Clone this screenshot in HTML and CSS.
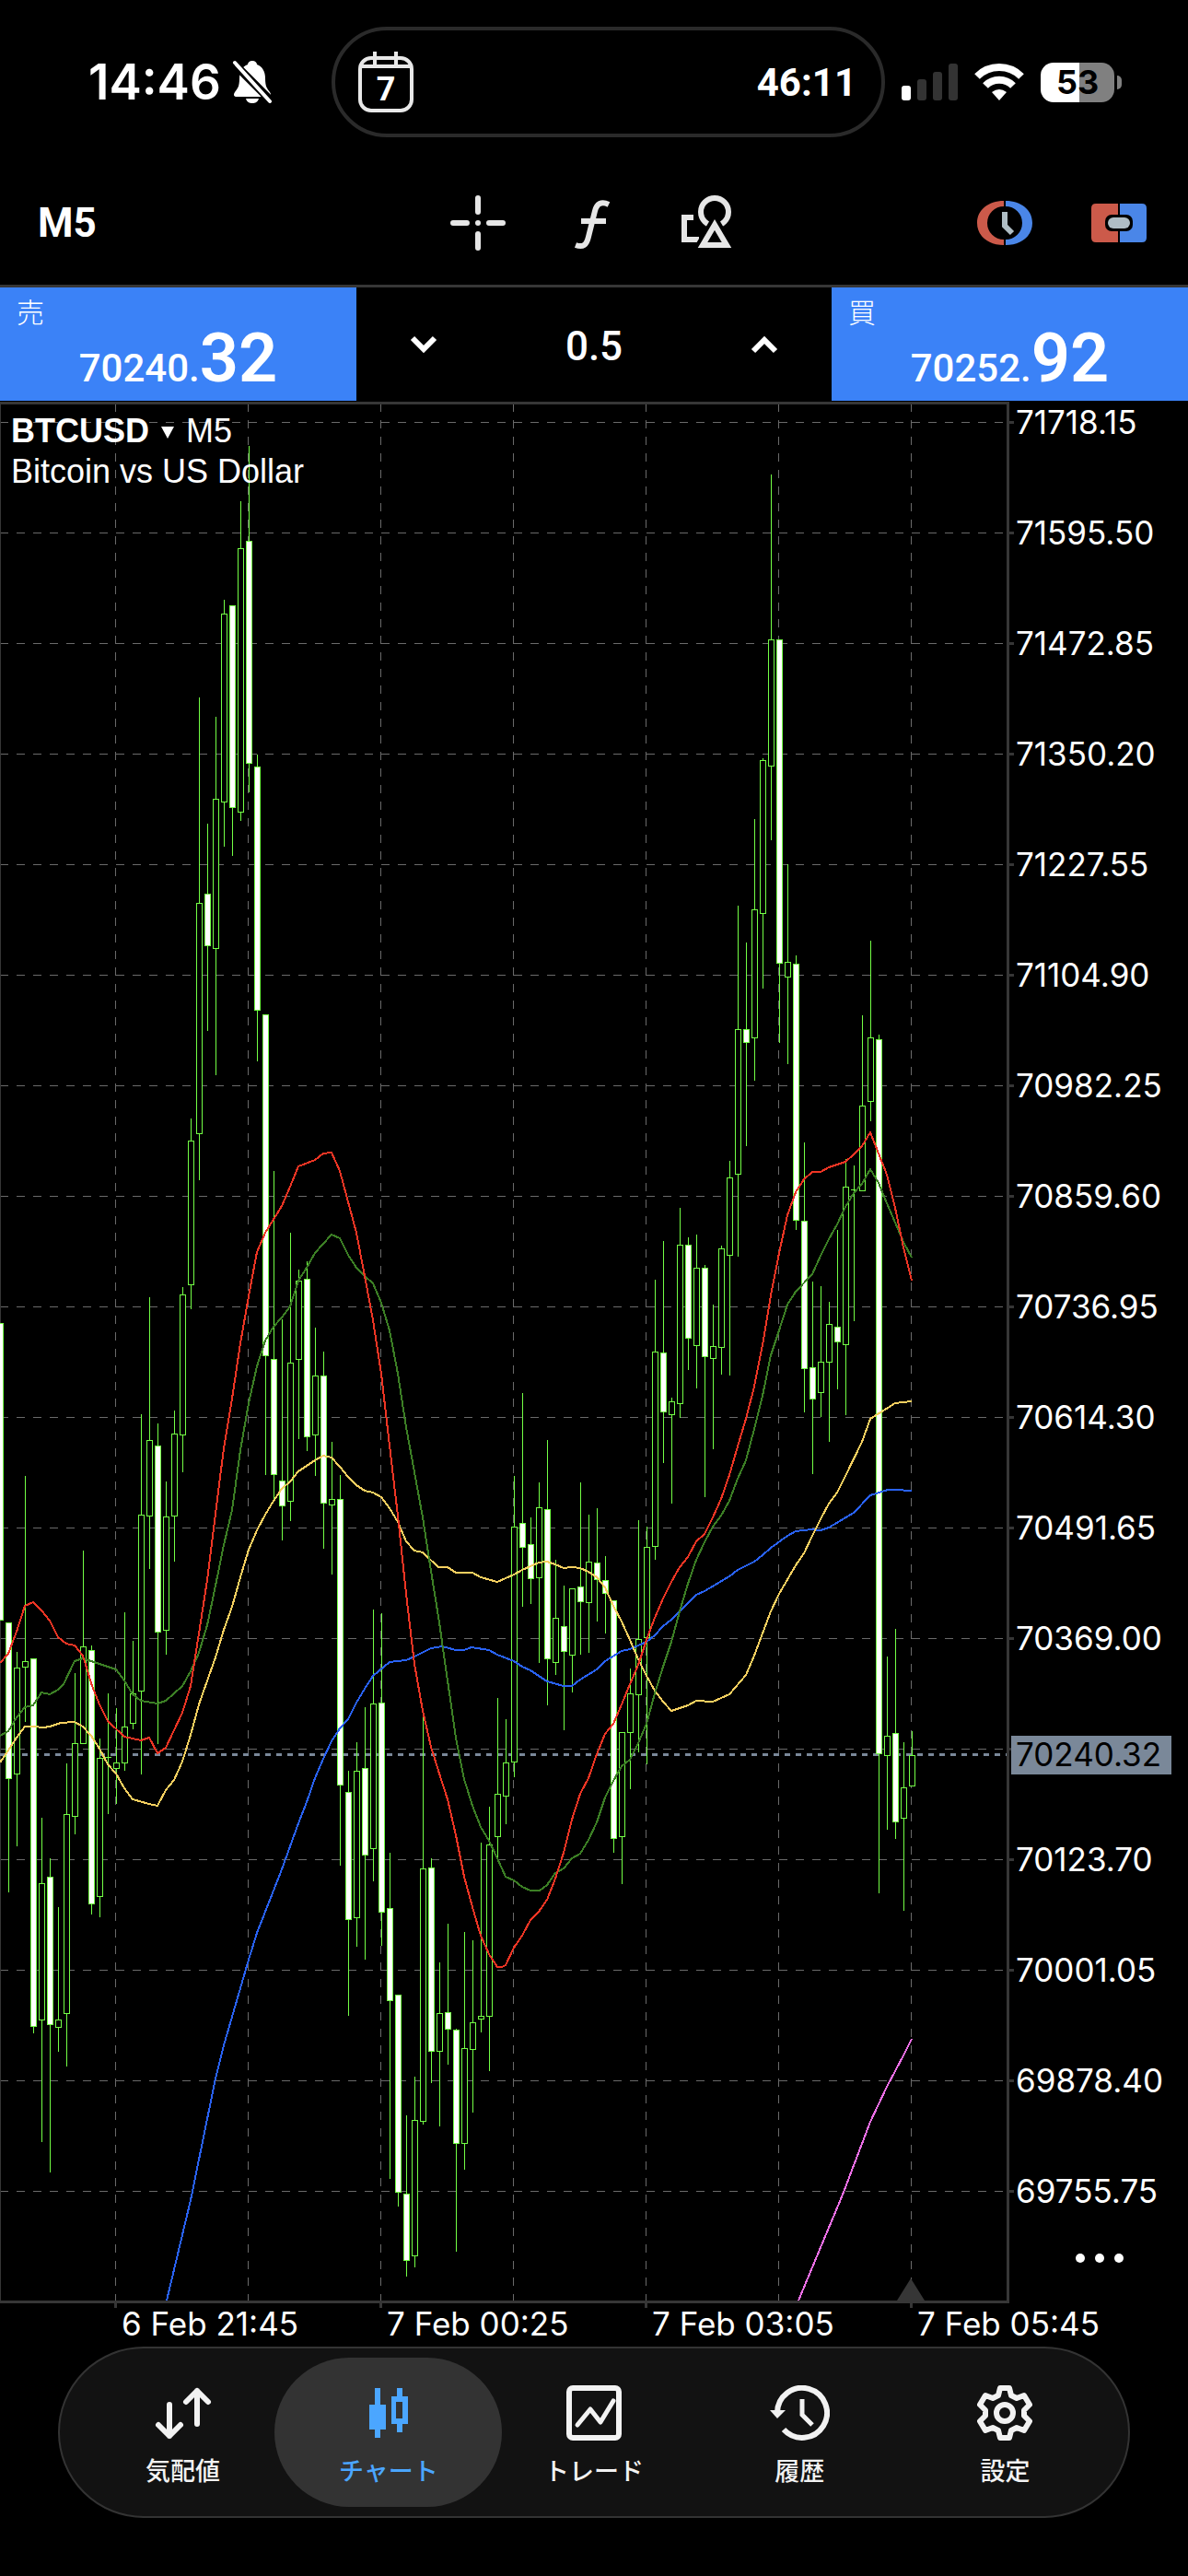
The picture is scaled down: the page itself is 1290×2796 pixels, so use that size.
FILE: index.html
```html
<!DOCTYPE html>
<html lang="ja">
<head>
<meta charset="utf-8">
<meta name="viewport" content="width=device-width, initial-scale=1">
<title>BTCUSD M5</title>
<link rel="stylesheet" href="styles.css">
</head>

<body>
<header class="status">
  <div class="status-left">
    <span class="clock">14:46</span>
    <svg class="bell" width="44" height="48" viewBox="0 0 44 48">
      <path fill="#fff" d="M22 1c3 0 5 2 5 4 6 2 9 8 9 15 0 9 2 11 5 15 2 3 1 5-2 5H5c-3 0-4-2-2-5 3-4 5-6 5-15 0-7 3-13 9-15 0-2 2-4 5-4zM15 42h14c-1 4-4 5-7 5s-6-1-7-5z"/>
      <path stroke="#000" stroke-width="9" d="M1 3l42 42"/>
      <path stroke="#fff" stroke-width="4" stroke-linecap="round" d="M3 3l38 42"/>
    </svg>
  </div>
  <div class="island">
    <div class="calendar">
      <svg width="60" height="68" viewBox="0 0 60 68" fill="none" stroke="#e8e8e8" stroke-width="4">
        <rect x="2" y="8" width="56" height="57" rx="12"/>
        <path d="M2 17h56M18 1v14M41 1v14"/>
      </svg>
      <span class="calendar-day">7</span>
    </div>
    <span class="timer">46:11</span>
  </div>
  <div class="status-right">
    <svg width="61" height="40" viewBox="0 0 61 40">
      <rect x="0" y="24" width="10" height="16" rx="3" fill="#fff"/>
      <rect x="17" y="17" width="10" height="23" rx="3" fill="#333"/>
      <rect x="34" y="9" width="10" height="31" rx="3" fill="#333"/>
      <rect x="51" y="0" width="10" height="40" rx="3" fill="#333"/>
    </svg>
    <svg width="54" height="40" viewBox="0 0 54 40" fill="none" stroke="#fff">
      <path stroke-width="8" d="M3 14a34 34 0 0 1 48 0"/>
      <path stroke-width="8" d="M12 24a21 21 0 0 1 30 0"/>
      <path fill="#fff" stroke="none" d="M27 40l-8-9q8-6 16 0z"/>
    </svg>
    <div class="battery"><span class="battery-level">53</span></div>
  </div>
</header>

<div class="toolbar">
  <button class="timeframe">M5</button>
  <div class="tools">
    <button class="tool" aria-label="十字線">
      <svg width="60" height="60" viewBox="0 0 60 60" stroke="#e6e6e6" stroke-width="6" stroke-linecap="round">
        <path d="M30 3v15M30 42v15M3 30h15M42 30h15M30 30h0"/>
      </svg>
    </button>
    <button class="tool" aria-label="インディケータ">
      <svg width="60" height="60" viewBox="0 0 60 60" fill="none" stroke="#e6e6e6" stroke-width="6">
        <path d="M48 10c-8-4-13-1-15 7l-7 28c-2 9-6 12-14 9"/>
        <path d="M18 28h27"/>
      </svg>
    </button>
    <button class="tool" aria-label="オブジェクト">
      <svg width="60" height="60" viewBox="0 0 60 60" fill="none" stroke="#e6e6e6" stroke-width="6">
        <path d="M16 24H6v24h16"/>
        <circle cx="39" cy="18" r="15"/>
        <path stroke="#000" stroke-width="14" d="M39 32L26 54h26z"/>
        <path d="M39 32L26 54h26z"/>
      </svg>
    </button>
  </div>
  <div class="modes">
    <button class="tool" aria-label="時間">
      <svg width="60" height="60" viewBox="0 0 60 60">
        <path fill="#cc5a4a" d="M29 6v6a18 18 0 0 0 0 36v6C12 54 0 44 0 30S12 6 29 6z"/>
        <path fill="#4a86e8" d="M31 6v6a18 18 0 0 1 0 36v6c17 0 29-10 29-24S48 6 31 6z"/>
        <path fill="none" stroke="#b0bec5" stroke-width="6" d="M30 18v15l8 8"/>
      </svg>
    </button>
    <button class="tool" aria-label="ワンクリック取引">
      <svg width="60" height="60" viewBox="0 0 60 60">
        <path fill="#cc5a4a" d="M29 9H5q-5 0-5 5v32q0 5 5 5h24z"/>
        <path fill="#4a86e8" d="M31 9h24q5 0 5 5v32q0 5-5 5H31z"/>
        <rect x="15" y="21" width="30" height="18" rx="7"/>
        <rect x="18" y="24" width="24" height="12" rx="6" fill="#b0bec5"/>
      </svg>
    </button>
  </div>
</div>

<div class="trade">
  <button class="deal">
    <span class="deal-side">売</span>
    <span class="deal-price">70240.<b>32</b></span>
  </button>
  <div class="volume">
    <button class="step" aria-label="減らす">
      <svg width="30" height="20" viewBox="0 0 30 20" fill="none" stroke="#fff" stroke-width="6"><path d="M3 3l12 12L27 3"/></svg>
    </button>
    <input class="lots" type="text" value="0.5" aria-label="ロット">
    <button class="step" aria-label="増やす">
      <svg width="30" height="20" viewBox="0 0 30 20" fill="none" stroke="#fff" stroke-width="6"><path d="M3 17L15 5l12 12"/></svg>
    </button>
  </div>
  <button class="deal">
    <span class="deal-side">買</span>
    <span class="deal-price">70252.<b>92</b></span>
  </button>
</div>

<main class="chart">
  <svg class="plot" id="plot" viewBox="0 436 1290 2111"></svg>
  <button class="symbol">
    <span><b>BTCUSD</b> <i class="caret"></i> M5</span>
    <span>Bitcoin vs US Dollar</span>
  </button>
  <button class="more" aria-label="メニュー"><i></i><i></i><i></i></button>
</main>

<nav class="tabs">
  <a class="tab" href="#quotes">
    <svg width="66" height="60" viewBox="0 0 66 60" fill="none" stroke="#f2f2f2" stroke-width="6" stroke-linecap="round" stroke-linejoin="round">
      <path d="M18 21v34M6 43l12 12 12-12M48 42V6M36 18L48 6l12 12"/>
    </svg>
    <span>気配値</span>
  </a>
  <a class="tab active" href="#chart">
    <svg width="60" height="60" viewBox="0 0 60 60" fill="#4ba6ff">
      <path d="M15 3h6v18h6v27h-6v9h-6v-9H9V21h6z"/>
      <path fill-rule="evenodd" d="M39 3h6v9h6v30h-6v9h-6v-9h-6V12h6zM38 18v18h7V18z"/>
    </svg>
    <span>チャート</span>
  </a>
  <a class="tab" href="#trade">
    <svg width="60" height="60" viewBox="0 0 60 60" fill="none" stroke="#f2f2f2" stroke-width="6">
      <rect x="3" y="3" width="54" height="54" rx="4"/>
      <path stroke-width="5" stroke-linecap="round" stroke-linejoin="round" d="M12 43l14-17 11 14 14-23"/>
    </svg>
    <span>トレード</span>
  </a>
  <a class="tab" href="#history">
    <svg width="66" height="60" viewBox="0 0 66 60" fill="none" stroke="#f2f2f2" stroke-width="6">
      <path d="M9 30a27 27 0 1 1 7 18"/>
      <path fill="#f2f2f2" stroke="none" d="M1 27h17l-9 9z"/>
      <path stroke-width="5" d="M36 15v17l11 11"/>
    </svg>
    <span>履歴</span>
  </a>
  <a class="tab" href="#settings">
    <svg width="60" height="60" viewBox="0 0 60 60" fill="none" stroke="#f2f2f2" stroke-width="6" stroke-linejoin="round">
      <path d="M25 3h10l2 8 6 3 8-3 6 10-6 6v6l6 6-6 10-8-3-6 3-2 8H25l-2-8-6-3-8 3-6-10 6-6v-6l-6-6 6-10 8 3 6-3z"/>
      <circle cx="30" cy="30" r="9"/>
    </svg>
    <span>設定</span>
  </a>
</nav>

<script src="chart.js"></script>
</body>
</html>
```

FILE: styles.css
```css
* {
  box-sizing: border-box;
}

body {
  margin: 0;
  min-height: 100vh;
  background: #000;
  color: #fff;
  font-family: Inter, "Noto Sans CJK JP", sans-serif;
}

button {
  padding: 0;
  border: 0;
  background: none;
  color: inherit;
  font: inherit;
}

svg {
  display: block;
  flex-shrink: 0;
}

/* status bar */
.status {
  display: grid;
  grid-template-columns: 360fr 601fr 329fr;
  align-items: center;
  padding-top: 29px;
}

.status-left {
  display: flex;
  align-items: center;
  gap: 12px;
  padding-left: 96px;
}

.clock {
  font-size: 53px;
  font-weight: 600;
  line-height: 56px;
}

.island {
  display: flex;
  align-items: center;
  justify-content: space-between;
  height: 120px;
  padding: 0 27px 0 25px;
  border: 4px solid #2a2a2a;
  border-radius: 60px;
}

.calendar {
  display: grid;
  place-items: center;
}

.calendar > * {
  grid-area: 1 / 1;
}

.calendar-day {
  padding-top: 16px;
  font: bold 36px Roboto, sans-serif;
}

.timer {
  font: bold 42px Roboto, sans-serif;
}

.status-right {
  display: flex;
  align-items: center;
  gap: 18px;
  padding-left: 18px;
}

.battery {
  position: relative;
  width: 80px;
  height: 43px;
  border-radius: 14px;
  background: linear-gradient(to right, #fff 53%, #808080 53%);
  color: #000;
  font-size: 36px;
  font-weight: 700;
  line-height: 43px;
  text-align: center;
}

.battery::after {
  content: "";
  position: absolute;
  top: 14px;
  right: -8px;
  width: 5px;
  height: 15px;
  border-radius: 0 5px 5px 0;
  background: #808080;
}

/* toolbar */
.toolbar {
  display: grid;
  grid-template-columns: 1fr auto 1fr;
  align-items: center;
  height: 163px;
  padding: 26px 45px 0 41px;
  border-bottom: 3px solid #363636;
}

.timeframe {
  justify-self: start;
  font: bold 44px Roboto, sans-serif;
}

.tools,
.modes {
  display: flex;
  gap: 64px;
}

.modes {
  justify-self: end;
}

/* one click trading */
.trade {
  display: grid;
  grid-template-columns: 3fr 4fr 3fr;
  height: 124px;
  padding-bottom: 1px;
}

.deal {
  display: flex;
  flex-direction: column;
  justify-content: space-between;
  padding: 8px 18px;
  background: #3b82f7;
}

.deal-side {
  align-self: flex-start;
  font: 300 30px/34px "Noto Sans CJK JP", sans-serif;
}

.deal-price {
  align-self: center;
  font: 500 42px/54px Roboto, sans-serif;
}

.deal-price b {
  font-size: 74px;
  font-weight: 600;
}

.volume {
  display: flex;
  align-items: center;
  justify-content: space-between;
  padding: 0 58px;
}

.lots {
  width: 160px;
  padding: 4px 0 0;
  border: 0;
  background: none;
  color: #fff;
  font: 500 44px/50px Roboto, sans-serif;
  text-align: center;
}

/* chart */
.chart {
  position: relative;
}

.plot {
  width: 100%;
}

.plot text {
  fill: #fff;
  font: 35px Inter, sans-serif;
}

.frame {
  fill: #363636;
}

.grid {
  stroke: #6a6a6a;
  stroke-dasharray: 9 9;
  shape-rendering: crispEdges;
}

.bid {
  stroke: #7a8899;
  stroke-width: 3;
  stroke-dasharray: 6 6;
  shape-rendering: crispEdges;
}

.bid-box {
  fill: #7a8899;
}

.plot .bid-text {
  fill: #000;
}

.candle {
  fill: #000;
  stroke: #73ff45;
  shape-rendering: crispEdges;
}

.candle.down {
  fill: #fff;
}

.wick {
  stroke: #73ff45;
  shape-rendering: crispEdges;
}

.ma {
  fill: none;
  stroke-width: 2;
  shape-rendering: crispEdges;
}

.symbol {
  position: absolute;
  top: 10px;
  left: 12px;
  font: 36px/44px "Liberation Sans", Arial, sans-serif;
  text-align: left;
}

.symbol span {
  display: block;
}

.caret {
  display: inline-block;
  margin: 0 3px 4px;
  border: 7px solid transparent;
  border-top: 13px solid #fff;
  border-bottom: 0;
}

.more {
  position: absolute;
  right: 70px;
  bottom: 91px;
  display: flex;
  gap: 11px;
}

.more i {
  width: 10px;
  height: 10px;
  border-radius: 50%;
  background: #fff;
}

/* bottom tabs */
.tabs {
  display: flex;
  height: 186px;
  margin: 0 63px;
  padding: 10px 22px;
  border: 2px solid #333;
  border-radius: 93px;
  background: #121212;
}

.tab {
  display: flex;
  flex: 1;
  flex-direction: column;
  align-items: center;
  justify-content: center;
  gap: 13px;
  padding-top: 9px;
  border-radius: 81px;
  color: #f2f2f2;
  font: 500 27px/38px "Noto Sans CJK JP", sans-serif;
  text-decoration: none;
}

.tab.active {
  margin: 0 -12px;
  padding: 9px 12px 0;
  background: #333;
  color: #4ba6ff;
}
```

FILE: chart.js
```js
var plot = document.getElementById('plot');

// high, body top, body bottom, low, 1 = bearish; one every 9 units
var candles = [
  [1436,1436,1758,1758,1], [1761,1761,1930,2053,1], [1793,1810,1925,2003,0], [1602,1803,1809,1868,0], [1800,1800,2199,2206,1],
  [1973,2044,2192,2324,0], [2017,2037,2197,2357,1], [2070,2192,2200,2226,0], [1914,1969,2185,2242,0], [1816,1892,1971,1990,0],
  [1683,1787,1892,1892,0], [1786,1791,2066,2077,1], [1887,1908,2058,2080,0], [1838,1907,1907,1968,0], [1854,1913,1919,1957,0],
  [1750,1874,1913,1921,0], [1781,1838,1870,1876,0], [1535,1644,1835,1925,0], [1408,1563,1645,1702,0], [1545,1569,1771,1892,1],
  [1608,1646,1769,1795,0], [1531,1556,1645,1694,0], [1397,1405,1557,1597,0], [1214,1238,1394,1420,0], [757,980,1230,1280,0],
  [894,970,1026,1118,1], [778,867,1029,1166,0], [651,666,870,918,0], [657,657,876,928,1], [544,595,881,890,0],
  [484,587,828,859,1], [819,832,1096,1151,1], [1101,1101,1471,1600,1], [1271,1475,1600,1629,1], [1432,1607,1634,1671,1],
  [1338,1479,1629,1650,0], [1378,1390,1475,1561,0], [1369,1388,1559,1574,1], [1441,1493,1557,1601,0], [1467,1493,1631,1680,1],
  [1565,1627,1633,1708,0], [1601,1627,1937,2024,1], [1922,1945,2083,2187,1], [1891,1922,2081,2112,0], [1853,1919,2013,2126,1],
  [1747,1849,2006,2041,0], [1751,1848,2075,2111,1], [2011,2071,2171,2364,1], [2165,2165,2379,2394,1], [2296,2381,2453,2470,1],
  [2254,2301,2448,2460,0], [1862,2028,2302,2305,0], [2017,2027,2226,2260,1], [2130,2185,2226,2307,0], [2088,2184,2202,2240,1],
  [2202,2203,2326,2443,1], [2097,2223,2326,2354,0], [2106,2195,2224,2292,0], [2000,2188,2191,2205,0], [1961,2002,2188,2247,0],
  [1843,1947,1993,2015,0], [1866,1913,1949,1979,0], [1602,1657,1912,1928,0], [1512,1653,1679,1743,1], [1647,1676,1713,1740,1],
  [1609,1636,1712,1804,0], [1563,1638,1800,1850,1], [1693,1756,1804,1817,0], [1721,1765,1792,1877,1], [1724,1724,1796,1836,0],
  [1609,1722,1738,1795,1], [1644,1695,1739,1793,0], [1637,1696,1714,1759,1], [1689,1715,1729,1772,1], [1737,1737,1995,2010,1],
  [1880,1880,1993,2044,0], [1811,1838,1880,1941,0], [1650,1779,1839,1901,0], [1657,1679,1777,1914,0], [1389,1467,1678,1692,0],
  [1347,1468,1532,1587,1], [1517,1521,1535,1631,0], [1311,1351,1523,1538,0], [1343,1351,1452,1486,1], [1340,1376,1460,1506,0],
  [1373,1376,1472,1624,1], [1416,1461,1474,1572,0], [1352,1355,1462,1491,0], [1260,1278,1362,1492,0], [983,1117,1274,1363,0],
  [1023,1117,1131,1243,1], [889,987,1126,1172,0], [823,825,991,1072,0], [515,694,831,911,0], [694,694,1045,1131,1],
  [938,1044,1060,1154,0], [1037,1046,1324,1334,1], [1240,1325,1485,1532,1], [1391,1484,1518,1599,1], [1396,1478,1511,1537,0],
  [1413,1437,1478,1564,0], [1335,1440,1456,1507,1], [1258,1288,1459,1535,0], [1265,1291,1291,1433,0], [1102,1200,1292,1292,0],
  [1021,1126,1195,1216,0], [1123,1128,1903,2054,1], [1798,1884,1905,1985,0], [1768,1881,1977,1995,1], [1891,1940,1973,2073,0],
  [1879,1905,1938,1938,0]
];

var averages = [
  ['#2962f5', '181,2497 207,2388 234,2256 243,2220 270,2127 279,2098 306,2029 324,1979 333,1956 342,1930 351,1909 360,1890 369,1876 378,1866 387,1848 396,1833 405,1819 423,1804 441,1802 450,1798 468,1789 480,1787 495,1791 504,1791 512,1788 531,1791 540,1796 558,1803 567,1809 576,1813 594,1825 612,1830 621,1830 630,1823 648,1812 657,1803 675,1792 684,1790 702,1782 711,1775 720,1765 729,1758 756,1731 765,1727 792,1711 801,1704 819,1695 828,1688 837,1680 855,1667 864,1662 882,1660 891,1661 900,1658 927,1642 945,1623 964,1617 972,1617 990,1618'],
  ['#f6d060', '0,1913 9,1900 18,1886 27,1874 36,1874 47,1875 54,1874 66,1870 81,1869 90,1874 99,1884 108,1898 117,1915 126,1925 135,1941 144,1953 162,1958 171,1960 180,1943 189,1932 198,1912 207,1883 216,1850 223,1830 234,1799 243,1769 252,1744 261,1712 270,1682 279,1661 288,1644 297,1629 306,1616 315,1608 324,1597 333,1591 342,1585 351,1580 360,1582 369,1592 378,1603 387,1612 396,1618 405,1620 414,1625 423,1637 432,1652 441,1673 450,1683 459,1685 476,1701 486,1701 495,1707 513,1707 522,1712 540,1717 549,1713 558,1709 567,1704 585,1696 594,1695 603,1698 612,1702 621,1701 630,1702 639,1706 648,1712 657,1723 666,1743 675,1760 684,1780 693,1801 702,1819 711,1835 720,1847 729,1857 747,1851 756,1846 774,1847 792,1839 810,1818 819,1797 828,1773 837,1749 846,1730 864,1699 873,1686 882,1667 891,1649 900,1632 909,1620 918,1602 936,1565 945,1540 972,1523 990,1521'],
  ['#3c7f25', '0,1884 9,1879 18,1864 27,1853 36,1851 45,1837 54,1839 63,1834 69,1828 81,1803 90,1800 108,1806 126,1812 135,1824 144,1839 153,1846 171,1849 180,1846 198,1830 207,1814 216,1794 225,1764 234,1721 243,1677 252,1639 261,1574 270,1523 279,1483 288,1455 297,1440 306,1430 315,1418 324,1390 333,1376 342,1360 351,1350 360,1340 369,1344 378,1362 387,1376 396,1385 405,1393 414,1414 423,1444 432,1491 441,1549 450,1598 459,1647 468,1705 477,1761 486,1824 495,1886 504,1931 513,1960 522,1983 531,1998 540,2017 549,2037 558,2041 567,2048 576,2052 586,2052 594,2046 603,2033 612,2028 621,2017 630,2012 639,1997 648,1978 657,1951 666,1933 675,1917 684,1910 693,1892 702,1871 711,1838 720,1809 729,1782 738,1749 747,1719 756,1693 765,1674 774,1657 783,1645 792,1629 801,1605 810,1585 819,1551 828,1515 837,1471 846,1444 855,1416 864,1402 882,1383 891,1363 900,1345 909,1329 918,1310 927,1295 936,1285 945,1269 954,1284 963,1306 981,1348 990,1365'],
  ['#ee3524', '0,1805 9,1795 18,1771 27,1743 36,1739 45,1748 54,1759 63,1777 72,1784 81,1786 90,1797 100,1830 108,1850 117,1868 135,1885 153,1889 162,1886 171,1903 180,1897 198,1859 207,1830 216,1773 225,1715 234,1643 243,1572 252,1518 261,1458 270,1407 279,1359 288,1338 306,1309 315,1288 324,1266 342,1259 351,1252 360,1251 369,1271 387,1338 396,1385 405,1433 414,1491 423,1569 432,1645 441,1730 450,1806 459,1857 468,1896 477,1925 486,1953 495,1992 504,2037 513,2070 522,2101 531,2121 540,2135 545,2135 549,2133 558,2114 567,2101 576,2084 585,2075 594,2062 603,2039 612,2011 621,1975 630,1947 639,1930 648,1904 657,1882 666,1871 675,1850 684,1828 693,1807 702,1780 711,1756 720,1735 729,1717 738,1701 747,1690 756,1673 765,1665 774,1647 783,1627 792,1601 801,1570 810,1540 819,1505 828,1460 837,1406 846,1360 855,1319 864,1294 873,1280 882,1272 891,1272 900,1267 918,1261 927,1253 936,1244 945,1229 954,1252 963,1275 972,1311 981,1354 990,1390'],
  ['#ee70e8', '867,2497 915,2382 945,2303 963,2265 981,2231 990,2213']
];

var times = ['6 Feb 21:45', '7 Feb 00:25', '7 Feb 03:05', '7 Feb 05:45'];
var out = '';
var i, x, y;

// price grid
for (i = 0; i < 17; i++) {
  y = 458 + i * 120;
  out += '<path class="grid" d="M0 ' + (y + 0.5) + 'H1093"/>';
  out += '<rect class="frame" x="1096" y="' + (y - 1) + '" width="5" height="3"/>';
  if (i !== 12) {
    out += '<text x="1103" y="' + (y + 13) + '">' + (71718.15 - i * 122.65).toFixed(2) + '</text>';
  }
}

// time grid
for (i = 0; i < 7; i++) {
  x = 125 + i * 144;
  out += '<path class="grid" d="M' + (x + 0.5) + ' 438V2497"/>';
  if (i % 2 === 0) {
    out += '<rect class="frame" x="' + (x - 1) + '" y="2500" width="3" height="5"/>';
    out += '<text x="' + (x + 7) + '" y="2535">' + times[i / 2] + '</text>';
  }
}

// frame and last bar marker
out += '<path class="frame" d="M0 436h1096v2064H0v-3h1093V439H1v2058H0z"/>';
out += '<path class="frame" d="M989 2473l15 24h-30z"/>';

out += '<path class="bid" d="M0 1904.5H1093"/>';

for (i = 0; i < candles.length; i++) {
  var c = candles[i];
  x = i * 9;
  out += '<path class="wick" d="M' + (x + 0.5) + ' ' + c[0] + 'V' + (c[3] + 1) + '"/>';
  if (c[1] === c[2]) {
    out += '<path class="wick" d="M' + (x - 3) + ' ' + (c[1] + 0.5) + 'h7"/>';
  } else {
    out += '<rect class="candle' + (c[4] ? ' down' : '') + '" x="' + (x - 2.5) + '" y="' + (c[1] + 0.5) + '" width="6" height="' + (c[2] - c[1]) + '"/>';
  }
}

for (i = 0; i < averages.length; i++) {
  out += '<polyline class="ma" stroke="' + averages[i][0] + '" points="' + averages[i][1] + '"/>';
}

out += '<rect class="bid-box" x="1098" y="1884" width="174" height="42"/>';
out += '<text class="bid-text" x="1103" y="1917">70240.32</text>';

plot.innerHTML = out;
```
